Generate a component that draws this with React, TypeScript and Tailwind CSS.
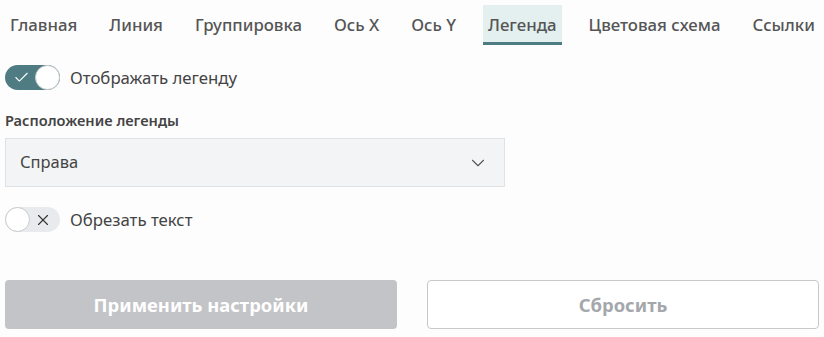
import { Check, ChevronDown, X } from 'lucide-react'

const tabs = ['Главная', 'Линия', 'Группировка', 'Ось X', 'Ось Y', 'Легенда', 'Цветовая схема', 'Ссылки']

const Toggle = ({ on }: { on: boolean }) => (
  <div
    className={`relative flex h-[25px] w-[55px] items-center rounded-full ${
      on ? 'bg-[#4f7c83]' : 'bg-[#e8eaee]'
    }`}
  >
    {on ? (
      <>
        <Check className="ml-[8px] h-[17px] w-[17px] text-white" strokeWidth={1.5} />
        <div className="absolute right-0 top-0 h-[25px] w-[25px] rounded-full border border-[#c7cbce] bg-white" />
      </>
    ) : (
      <>
        <div className="absolute left-0 top-0 h-[25px] w-[25px] rounded-full border border-[#c7cbce] bg-white" />
        <X className="ml-auto mr-[8px] h-[18px] w-[18px] text-[#333]" strokeWidth={1.5} />
      </>
    )}
  </div>
)

export default function App() {
  return (
    <div className="h-[337px] w-[824px] bg-[#fdfdfe] px-[5px] font-['Noto_Sans',sans-serif] text-[#555]">
      <div className="flex gap-[22px] pt-[5px]">
        {tabs.map((t) => (
          <div
            key={t}
            className={`flex h-[40px] shrink-0 items-center whitespace-nowrap px-[5px] pt-[3px] text-[16.8px] font-medium ${
              t === 'Легенда' ? 'border-b-[3px] border-[#4f7c83] bg-[#e3f0ef]' : 'border-b-[3px] border-transparent'
            }`}
          >
            {t}
          </div>
        ))}
      </div>

      <div className="mt-[20px] flex items-center gap-[10px]">
        <Toggle on />
        <span className="text-[16.8px] text-[#444]">Отображать легенду</span>
      </div>

      <div className="mt-[20px] text-[14.6px] font-semibold text-[#444]">Расположение легенды</div>

      <div className="mt-[6px] flex h-[49px] w-[500px] items-center justify-between border border-[#dfe3e6] bg-[#f3f4f5] pl-[14px] pr-[15px] text-[16.5px] text-[#444]">
        <span>Справа</span>
        <ChevronDown className="h-[22px] w-[22px] text-[#555]" strokeWidth={1.2} />
      </div>

      <div className="mt-[20px] flex items-center gap-[10px]">
        <Toggle on={false} />
        <span className="text-[16.8px] text-[#444]">Обрезать текст</span>
      </div>

      <div className="mt-[48px] flex gap-[30px]">
        <button className="h-[49px] w-[392px] rounded-[4px] bg-[#c3c4c7] text-[18.4px] font-bold text-white">
          Применить настройки
        </button>
        <button className="h-[49px] w-[392px] rounded-[4px] border border-[#c6c8cb] bg-white text-[18.4px] font-bold text-[#a4a7ab]">
          Сбросить
        </button>
      </div>
    </div>
  )
}
